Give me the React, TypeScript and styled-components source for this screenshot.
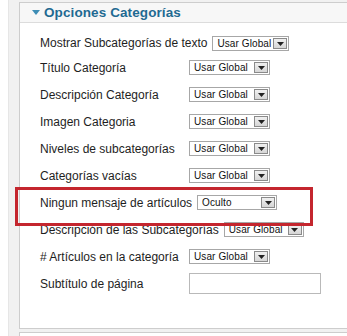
import React from "react";
import styled, { createGlobalStyle } from "styled-components";

const Global = createGlobalStyle`
  html, body { margin: 0; padding: 0; background: #ffffff; overflow: hidden; }
  body { font-family: "Liberation Sans", Arial, sans-serif; }
`;

const Page = styled.div`
  width: 347px;
  height: 336px;
  padding-left: 8px;
  box-sizing: border-box;
`;

const Strip = styled.div`
  height: 100%;
  background: #f1f1f1;
  border-left: 1px solid #e6e6e6;
  padding: 2px 0 0 10px;
  display: flex;
  flex-direction: column;
  gap: 3px;
  box-sizing: border-box;
`;

const Panel = styled.div`
  background: #ffffff;
  border: 1px solid #cdcdcd;
  border-right: none;
`;

const Header = styled.div`
  height: 19px;
  background: #f7f7f7;
  border-bottom: 1px solid #dcdcdc;
  display: flex;
  align-items: center;
  padding-left: 12px;
  gap: 4px;
`;

const Title = styled.span`
  color: #1f6a92;
  font-weight: bold;
  font-size: 13.5px;
  letter-spacing: 0.1px;
`;

const Body = styled.div`
  padding: 9px 0 31px 20px;
  display: flex;
  flex-direction: column;
`;

const Row = styled.div<{ $h?: number }>`
  position: relative;
  height: ${(p) => p.$h ?? 27}px;
  display: flex;
  align-items: center;
`;

const Label = styled.span`
  min-width: 144px;
  margin-right: 5px;
  font-size: 12px;
  color: #1e1e1e;
  white-space: nowrap;
`;

const SelectBox = styled.div<{ $w: number }>`
  width: ${(p) => p.$w}px;
  height: 15px;
  box-sizing: border-box;
  border: 1px solid #a7a7a7;
  background: #ffffff;
  display: flex;
  align-items: center;
  justify-content: space-between;
  padding: 0 1px 0 4px;
  flex-shrink: 0;
`;

const SelectText = styled.span`
  font-size: 10px;
  color: #111111;
  letter-spacing: 0.1px;
  white-space: nowrap;
`;

const DropButton = styled.span`
  width: 14px;
  height: 11px;
  box-sizing: border-box;
  border: 1px solid #8a8a8a;
  background: linear-gradient(#f0f0f0, #d6d6d6);
  display: flex;
  align-items: flex-end;
  justify-content: center;
  padding-bottom: 2px;
  flex-shrink: 0;
`;

const TextInput = styled.div`
  width: 132px;
  height: 21px;
  box-sizing: border-box;
  border: 1px solid #b9b9b9;
  background: #ffffff;
`;

const Highlight = styled.div`
  position: absolute;
  left: -25px;
  top: -2px;
  width: 298px;
  height: 39px;
  box-sizing: border-box;
  border: 3px solid #c4262e;
  pointer-events: none;
  z-index: 2;
`;

const NextPanel = styled.div`
  flex: 1;
  background: #ffffff;
  border-top: 1px solid #cdcdcd;
  border-left: 1px solid #cdcdcd;
`;

const Arrow = () => (
  <svg width="7" height="4" viewBox="0 0 7 4">
    <polygon points="0,0 7,0 3.5,4" fill="#222" />
  </svg>
);

const Caret = () => (
  <svg width="8" height="5" viewBox="0 0 8 5">
    <polygon points="0,0 8,0 4,5" fill="#3d8db5" />
  </svg>
);

const Select = ({ value, w = 81 }: { value: string; w?: number }) => (
  <SelectBox $w={w}>
    <SelectText>{value}</SelectText>
    <DropButton>
      <Arrow />
    </DropButton>
  </SelectBox>
);

type Item = { label: string; value?: string; w?: number; input?: boolean; mark?: boolean; h?: number };

const items: Item[] = [
  { label: "Mostrar Subcategorías de texto", value: "Usar Global", w: 77, h: 22 },
  { label: "Título Categoría", value: "Usar Global" },
  { label: "Descripción Categoría", value: "Usar Global" },
  { label: "Imagen Categoria", value: "Usar Global" },
  { label: "Niveles de subcategorías", value: "Usar Global" },
  { label: "Categorías vacías", value: "Usar Global" },
  { label: "Ningun mensaje de artículos", value: "Oculto", w: 80, mark: true },
  { label: "Descripción de las Subcategorías", value: "Usar Global", w: 80 },
  { label: "# Artículos en la categoría", value: "Usar Global" },
  { label: "Subtítulo de página", input: true },
];

export default function App() {
  return (
    <>
      <Global />
      <Page>
        <Strip>
          <Panel>
            <Header>
              <Caret />
              <Title>Opciones Categorías</Title>
            </Header>
            <Body>
              {items.map((it) => (
                <Row key={it.label} $h={it.h}>
                  <Label>{it.label}</Label>
                  {it.input ? <TextInput /> : <Select value={it.value!} w={it.w} />}
                  {it.mark && <Highlight />}
                </Row>
              ))}
            </Body>
          </Panel>
          <NextPanel />
        </Strip>
      </Page>
    </>
  );
}
